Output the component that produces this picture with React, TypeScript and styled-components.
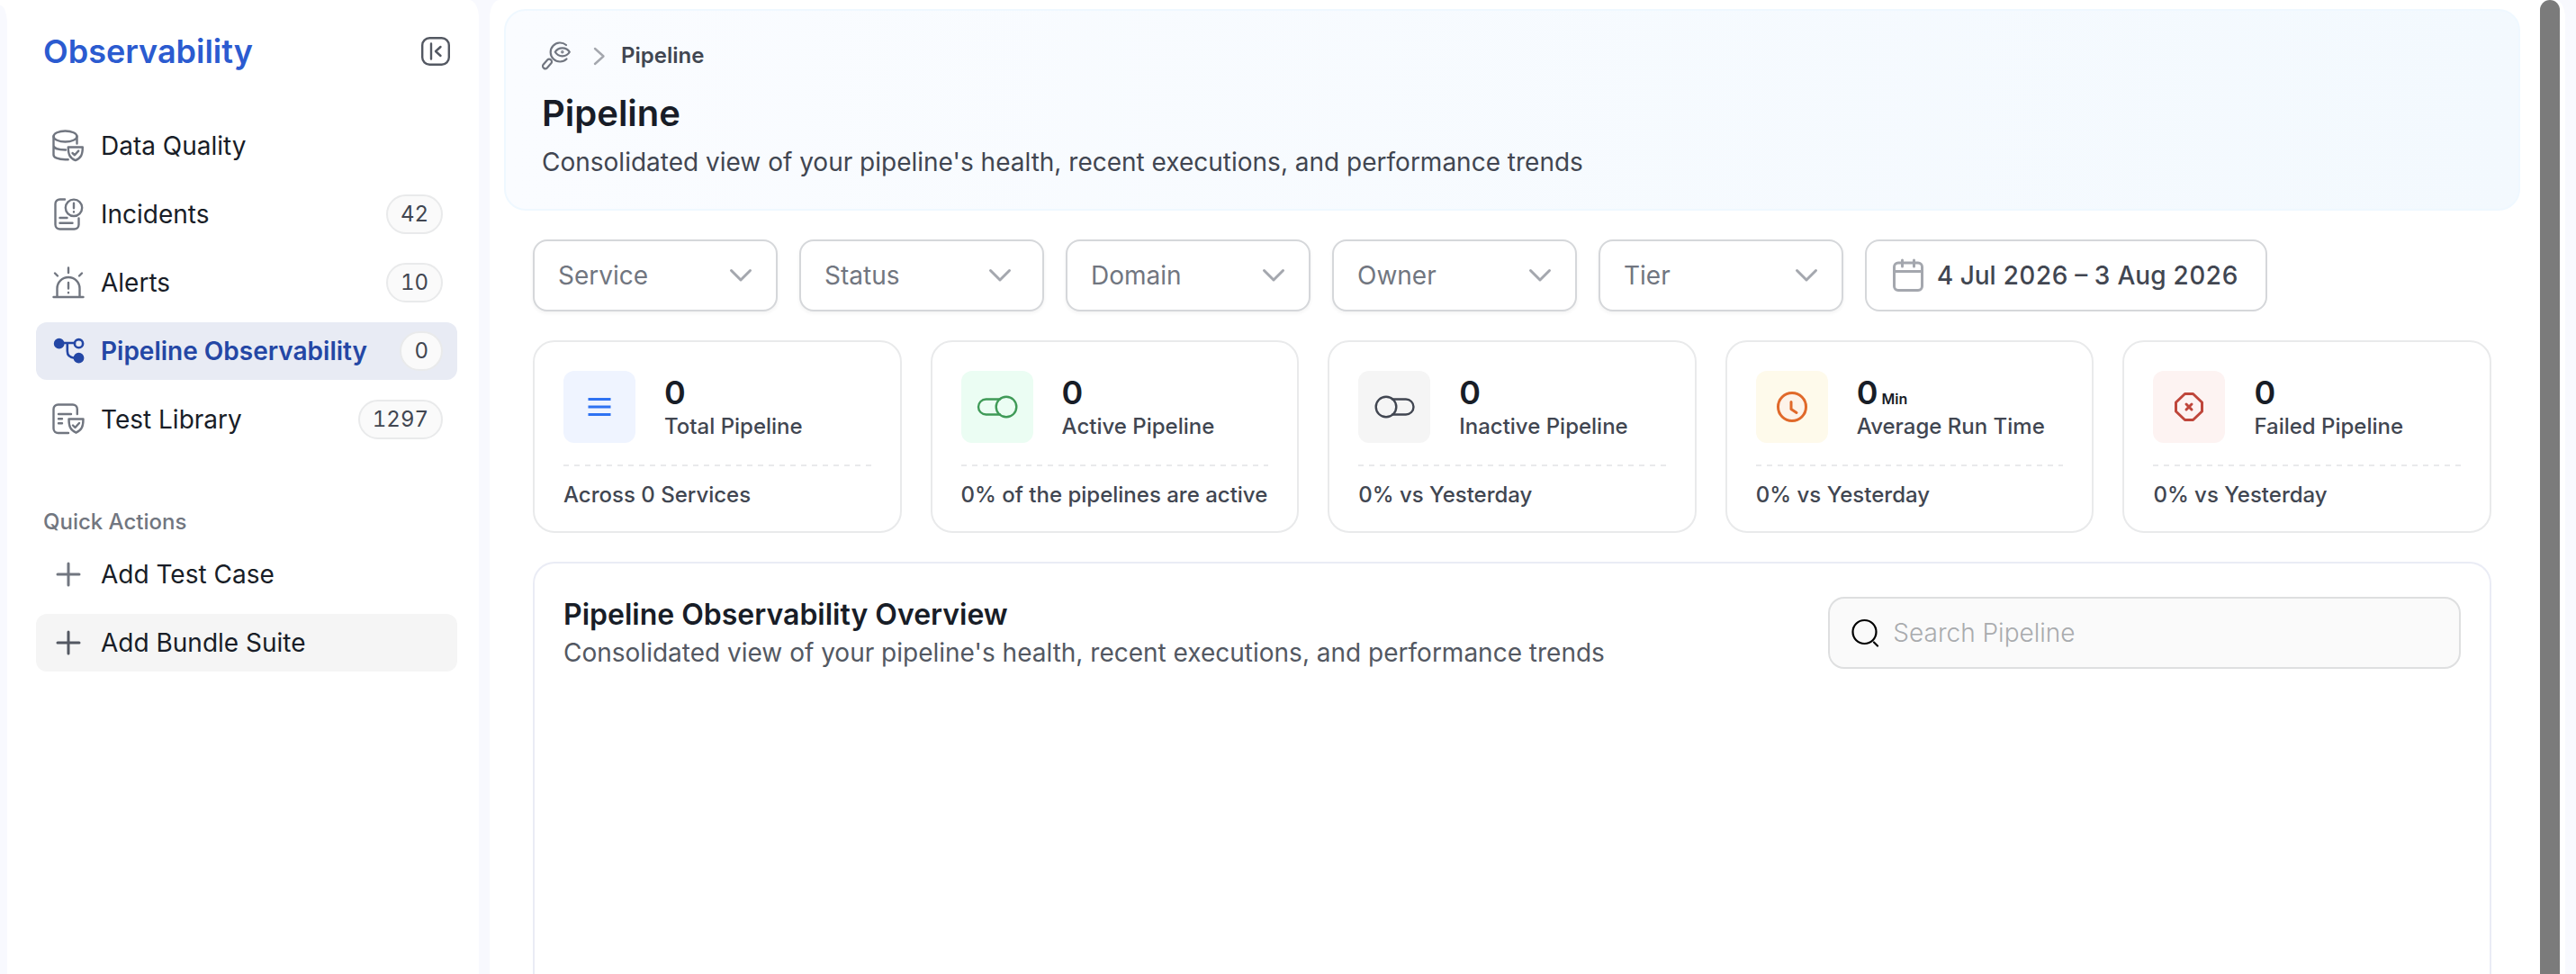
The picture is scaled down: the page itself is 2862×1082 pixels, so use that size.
import React from "react";
import styled, { createGlobalStyle } from "styled-components";

const GlobalStyle = createGlobalStyle`
  *, *::before, *::after { box-sizing: border-box; }
  body {
    margin: 0;
    background: #f8f9fe;
    color: #181d27;
    font-family: Inter, "Liberation Sans", sans-serif;
    font-size: 28px;
    line-height: 40px;
  }
  h1, h2, p { margin: 0; }
  button, input, select { font: inherit; color: inherit; }
`;

const Shell = styled.div`
  display: flex;
  height: 100vh;
  overflow: hidden;
`;

const RailEdge = styled.div`
  flex: none;
  width: 8px;
  background: linear-gradient(#ffffff, #ffffff) top / 100% 40px no-repeat;
  &::before {
    content: "";
    display: block;
    height: 100%;
    margin-top: 6px;
    border-top-right-radius: 8px 20px;
    background: #f8f9fe;
  }
`;

const Sidebar = styled.aside`
  flex: none;
  width: 524px;
  padding: 24px 24px 0 32px;
  background: #ffffff;
  border-radius: 0 11px 0 0 / 0 20px 0 0;
`;

const SidebarHeader = styled.div`
  display: flex;
  align-items: center;
  justify-content: space-between;
  height: 66px;
  margin-bottom: 40px;
  padding: 0 8px;
`;

const SidebarTitle = styled.h2`
  font-size: 36px;
  font-weight: 600;
  color: #2b5bd0;
`;

const IconButton = styled.button`
  display: flex;
  padding: 0;
  border: 0;
  background: none;
  color: #535862;
`;

const NavList = styled.nav`
  display: flex;
  flex-direction: column;
  gap: 12px;
`;

const NavLink = styled.a<{ $active?: boolean }>`
  display: flex;
  align-items: center;
  gap: 16px;
  height: 64px;
  padding: 0 16px;
  border-radius: 12px;
  text-decoration: none;
  white-space: nowrap;
  background: ${(p) => (p.$active ? "#e8ebf4" : "transparent")};
  color: ${(p) => (p.$active ? "#2447a5" : "#181d27")};
  font-weight: ${(p) => (p.$active ? 600 : 400)};
  svg { color: ${(p) => (p.$active ? "#2447a5" : "#717680")}; }
`;

const ActionButton = styled.button<{ $hovered?: boolean }>`
  display: flex;
  align-items: center;
  gap: 16px;
  height: 64px;
  padding: 0 16px;
  border: 0;
  border-radius: 12px;
  text-align: left;
  background: ${(p) => (p.$hovered ? "#f5f5f5" : "transparent")};
  svg { color: ${(p) => (p.$hovered ? "#535862" : "#717680")}; }
`;

const Badge = styled.span`
  margin-left: auto;
  padding: 0 14px;
  border: 2px solid #e9eaeb;
  border-radius: 22px;
  background: #fafafa;
  color: #414651;
  font-size: 24px;
  font-weight: 400;
  font-variant-numeric: tabular-nums;
`;

const GroupLabel = styled.p`
  margin: 64px 0 8px;
  padding: 0 8px;
  color: #717680;
  font-size: 24px;
  font-weight: 500;
  line-height: 36px;
`;

const Main = styled.main`
  display: flex;
  flex: 1;
  min-width: 0;
  margin: 0 12px;
  background: #ffffff;
  border-radius: 11px 11px 0 0 / 20px 20px 0 0;
`;

const Content = styled.div`
  display: flex;
  flex: 1;
  flex-direction: column;
  min-width: 0;
  padding: 10px 22px 0 16px;
`;

const ScrollThumb = styled.div`
  flex: none;
  width: 22px;
  margin-right: 6px;
  border-radius: 11px 11px 0 0;
  background: #7b7b7b;
`;

const PageHeader = styled.header`
  padding: 34px 40px 32px;
  border: 2px solid #eff8ff;
  border-radius: 24px;
  background: linear-gradient(90deg, #fafcff 0%, #f3f9fe 100%);
`;

const Breadcrumb = styled.nav`
  display: flex;
  align-items: center;
  height: 32px;
  gap: 16px;
  margin-bottom: 24px;
  color: #414651;
  font-size: 24px;
  font-weight: 600;
  a { display: flex; color: #717680; }
`;

const PageTitle = styled.h1`
  margin-bottom: 10px;
  font-size: 40px;
  font-weight: 600;
  line-height: 48px;
`;

const PageText = styled.p`
  color: #414651;
`;

const Body = styled.div`
  display: flex;
  flex: 1;
  flex-direction: column;
  gap: 32px;
  padding: 32px 32px 0;
`;

const Filters = styled.div`
  display: flex;
  gap: 24px;
`;

const FilterBox = styled.div<{ $inset: number }>`
  display: grid;
  flex: none;
  align-items: center;
  width: 272px;
  > * { grid-area: 1 / 1; }
  svg {
    justify-self: end;
    margin-right: ${(p) => p.$inset}px;
    color: #a4a7ae;
    pointer-events: none;
  }
`;

const FilterSelect = styled.select`
  appearance: none;
  width: 100%;
  height: 80px;
  padding: 0 26px;
  border: 2px solid #d5d7da;
  border-radius: 16px;
  background: #ffffff;
  box-shadow: 0 2px 4px rgba(10, 13, 18, 0.05);
  color: #717680;
`;

const DateButton = styled.button`
  display: flex;
  align-items: center;
  gap: 14px;
  height: 80px;
  padding: 0 30px 0 28px;
  border: 2px solid #d5d7da;
  border-radius: 16px;
  background: #ffffff;
  color: #414651;
  font-weight: 500;
  font-variant-numeric: tabular-nums;
  white-space: nowrap;
  svg { color: #a4a7ae; }
`;

const Cards = styled.section`
  display: grid;
  grid-template-columns: repeat(5, minmax(0, 1fr));
  gap: 32px;
`;

const Card = styled.article`
  padding: 32px 32px 24px;
  border: 2px solid #e9eaeb;
  border-radius: 24px;
  white-space: nowrap;
`;

const CardTop = styled.div`
  display: flex;
  align-items: center;
  gap: 32px;
`;

const CardIcon = styled.div<{ $bg: string; $fg: string }>`
  display: grid;
  place-items: center;
  width: 80px;
  height: 80px;
  border-radius: 12px;
  background: ${(p) => p.$bg};
  color: ${(p) => p.$fg};
`;

const CardValue = styled.p`
  font-size: 36px;
  font-weight: 600;
  line-height: 44px;
  small {
    margin-left: 4px;
    font-size: 16px;
    line-height: 16px;
  }
`;

const CardLabel = styled.p`
  color: #414651;
  font-size: 24px;
  font-weight: 500;
  line-height: 32px;
`;

const CardNote = styled(CardLabel)`
  padding-top: 16px;
`;

const Divider = styled.div`
  height: 2px;
  margin-top: 24px;
  background: repeating-linear-gradient(90deg, #e9eaeb 0 6px, transparent 6px 12px);
`;

const Overview = styled.section`
  display: flex;
  flex: 1;
  align-items: flex-start;
  justify-content: space-between;
  padding: 37px 32px 0;
  border: 2px solid #eaecf5;
  border-bottom: 0;
  border-radius: 24px 24px 0 0;
`;

const OverviewTitle = styled.h2`
  margin-bottom: 2px;
  font-size: 32px;
  font-weight: 600;
`;

const OverviewText = styled.p`
  color: #535862;
`;

const SearchBox = styled.label`
  display: flex;
  align-items: center;
  gap: 14px;
  width: calc(100% / 3);
  height: 80px;
  padding: 0 24px;
  border: 2px solid #dedfe0;
  border-radius: 18px;
  background: #fafafa;
  color: #000000;
  input {
    flex: 1;
    min-width: 0;
    padding: 0;
    border: 0;
    outline: 0;
    background: none;
    font-weight: 300;
  }
  input::placeholder { color: #a9abae; }
`;

type DrawingProps = {
  w: number;
  h: number;
  stroke?: number;
  children: React.ReactNode;
};

const Icon = styled.svg`
  flex: none;
`;

const Drawing = ({ w, h, stroke = 2.4, children }: DrawingProps) => (
  <Icon
    width={w}
    height={h}
    viewBox={`0 0 ${w} ${h}`}
    fill="none"
    stroke="currentColor"
    strokeWidth={stroke}
    strokeLinecap="round"
    strokeLinejoin="round"
    aria-hidden="true"
  >
    {children}
  </Icon>
);

const DataQualityIcon = () => (
  <Drawing w={40} h={40}>
    <ellipse cx="16.5" cy="9.5" rx="13" ry="6" />
    <path d="M3.500 9.500V30c0 3 5 5.200 13 5.200h3.200M29.500 9.500V17.500M3.500 19.500c0 2.800 5 5 13.500 5" />
    <path d="M19.800 21.500c5 0 11 0 16 0 0 8-1.600 12-8 14.600-6.400-2.600-8-6.600-8-14.600z" />
    <path d="M24.500 28l2.500 2.300 4.200-4.700" />
  </Drawing>
);

const IncidentsIcon = () => (
  <Drawing w={40} h={40}>
    <path d="M16 3.500h-5.500a5 5 0 0 0-5 5v23a5 5 0 0 0 5 5h16a5 5 0 0 0 5-5V24.500" />
    <path d="M10.500 24h8M10.500 29.700h14" />
    <circle cx="26" cy="12.800" r="9.200" />
    <path d="M26 7.800v5.500M26 17.300v.2" />
  </Drawing>
);

const AlertsIcon = () => (
  <Drawing w={40} h={40}>
    <path d="M3.500 36h33M7.500 36V26.500a12.500 12.500 0 0 1 25 0V36" />
    <path d="M20 3.500v5.500M5 9.500l3 3M35 9.500l-3 3M20 20v6.500M20 31v.2" />
  </Drawing>
);

const PipelineIcon = () => (
  <Drawing w={40} h={40} stroke={2.6}>
    <circle cx="9.700" cy="11.700" r="4.600" fill="currentColor" />
    <circle cx="31.500" cy="11.700" r="4.600" />
    <circle cx="31.500" cy="27.700" r="4.600" fill="currentColor" />
    <path d="M10 11h17M18.800 11v9c0 4.500 3 7.200 8 7.700" />
  </Drawing>
);

const TestLibraryIcon = () => (
  <Drawing w={40} h={40}>
    <path d="M29.800 14V8.500a5 5 0 0 0-5-5H8.500a5 5 0 0 0-5 5v21.500a5 5 0 0 0 5 5h11.500" />
    <path d="M9 14h14M9 19.300h4M9 24.300h4" />
    <path d="M20.500 19.500h16c0 8-1.600 12.500-8 15.200-6.400-2.700-8-7.200-8-15.200z" />
    <path d="M25 26.500l2.500 2.500 4.500-5" />
  </Drawing>
);

const PlusIcon = () => (
  <Drawing w={40} h={40} stroke={3}>
    <path d="M20 8v24M8 20h24" />
  </Drawing>
);

const CollapseIcon = () => (
  <Drawing w={32} h={32}>
    <rect x="1.200" y="1.200" width="29.600" height="29.600" rx="8" />
    <path d="M11 7.500v17M21.500 11l-5.500 5 5.500 5" />
  </Drawing>
);

const ObservabilityIcon = () => (
  <Drawing w={32} h={32} stroke={2.2}>
    <path d="M27 4a10.500 10.500 0 1 0 .5 15.500" />
    <path d="M14.800 11.800c3.500-6 12.500-6 16 0-3.500 6-12.500 6-16 0z" />
    <circle cx="22.800" cy="11.800" r=".6" />
    <rect x="-2.800" y="-6" width="5.600" height="12" rx="2.600" transform="translate(6 25) rotate(42)" />
  </Drawing>
);

const CrumbArrow = () => (
  <Drawing w={24} h={32}>
    <path d="M11 8l9.500 8.500L11 25" stroke="#a4a7ae" />
  </Drawing>
);

const ChevronIcon = () => (
  <Drawing w={26} h={16} stroke={3}>
    <path d="M2.500 2.500L13 13 23.500 2.500" />
  </Drawing>
);

const CalendarIcon = () => (
  <Drawing w={36} h={40} stroke={3}>
    <rect x="2.500" y="6" width="31" height="30.500" rx="4.500" />
    <path d="M2.500 15.500h31M11.500 3v7M24.500 3v7" />
  </Drawing>
);

const SearchIcon = () => (
  <Drawing w={32} h={32} stroke={2.2}>
    <circle cx="14.500" cy="15" r="13" />
    <path d="M25 26.500l4 4" />
  </Drawing>
);

const TotalIcon = () => (
  <Drawing w={44} h={44} stroke={3}>
    <path d="M9.500 13.500h25M9.500 22h25M9.500 30.500h25" strokeLinecap="butt" />
  </Drawing>
);

const ActiveIcon = () => (
  <Drawing w={46} h={32}>
    <path d="M26 7.500H10.500a8.500 8.500 0 0 0 0 17H26" />
    <circle cx="33" cy="16" r="11.300" />
  </Drawing>
);

const InactiveIcon = () => (
  <Drawing w={46} h={32}>
    <path d="M21 7.500h15a8.500 8.500 0 0 1 0 17H21" />
    <circle cx="14" cy="16" r="11.300" />
  </Drawing>
);

const ClockIcon = () => (
  <Drawing w={36} h={36} stroke={3}>
    <circle cx="18" cy="18" r="15.500" fill="#fdf3e9" />
    <path d="M17 12.500V20.500l6 4" />
  </Drawing>
);

const FailedIcon = () => (
  <Drawing w={36} h={36} stroke={3}>
    <path d="M13.500 3.500h9l10 9.500v10l-10 9.500h-9L3.500 23V13z" />
    <path d="M15 15l6 6M21 15l-6 6" />
  </Drawing>
);

const navItems = [
  { label: "Data Quality", icon: <DataQualityIcon /> },
  { label: "Incidents", icon: <IncidentsIcon />, count: 42 },
  { label: "Alerts", icon: <AlertsIcon />, count: 10 },
  { label: "Pipeline Observability", icon: <PipelineIcon />, count: 0, active: true },
  { label: "Test Library", icon: <TestLibraryIcon />, count: 1297 },
];

const filters = [
  { name: "Service", inset: 28 },
  { name: "Status", inset: 36 },
  { name: "Domain", inset: 28 },
  { name: "Owner", inset: 28 },
  { name: "Tier", inset: 28 },
];

const cards = [
  { label: "Total Pipeline", note: "Across 0 Services", icon: <TotalIcon />, bg: "#eff4ff", fg: "#2e72f2" },
  { label: "Active Pipeline", note: "0% of the pipelines are active", icon: <ActiveIcon />, bg: "#ebfdf3", fg: "#3f9a57" },
  { label: "Inactive Pipeline", note: "0% vs Yesterday", icon: <InactiveIcon />, bg: "#f5f5f5", fg: "#414651" },
  { label: "Average Run Time", note: "0% vs Yesterday", icon: <ClockIcon />, bg: "#fefaeb", fg: "#e0692a", unit: "Min" },
  { label: "Failed Pipeline", note: "0% vs Yesterday", icon: <FailedIcon />, bg: "#fdf3f2", fg: "#bf463b" },
];

const description =
  "Consolidated view of your pipeline's health, recent executions, and performance trends";

export default function App() {
  return (
    <>
      <GlobalStyle />
      <Shell>
        <RailEdge />
        <Sidebar>
          <SidebarHeader>
            <SidebarTitle>Observability</SidebarTitle>
            <IconButton type="button" aria-label="Collapse sidebar">
              <CollapseIcon />
            </IconButton>
          </SidebarHeader>
          <NavList>
            {navItems.map((item) => (
              <NavLink key={item.label} href="#" $active={item.active}>
                {item.icon}
                {item.label}
                {item.count !== undefined && <Badge>{item.count}</Badge>}
              </NavLink>
            ))}
          </NavList>
          <GroupLabel>Quick Actions</GroupLabel>
          <NavList>
            <ActionButton type="button">
              <PlusIcon />
              Add Test Case
            </ActionButton>
            <ActionButton type="button" $hovered>
              <PlusIcon />
              Add Bundle Suite
            </ActionButton>
          </NavList>
        </Sidebar>
        <Main>
          <Content>
            <PageHeader>
              <Breadcrumb>
                <a href="#" aria-label="Observability">
                  <ObservabilityIcon />
                </a>
                <CrumbArrow />
                <span>Pipeline</span>
              </Breadcrumb>
              <PageTitle>Pipeline</PageTitle>
              <PageText>{description}</PageText>
            </PageHeader>
            <Body>
              <Filters>
                {filters.map(({ name, inset }) => (
                  <FilterBox key={name} $inset={inset}>
                    <FilterSelect aria-label={name}>
                      <option>{name}</option>
                    </FilterSelect>
                    <ChevronIcon />
                  </FilterBox>
                ))}
                <DateButton type="button">
                  <CalendarIcon />4 Jul 2026 – 3 Aug 2026
                </DateButton>
              </Filters>
              <Cards>
                {cards.map((card) => (
                  <Card key={card.label}>
                    <CardTop>
                      <CardIcon $bg={card.bg} $fg={card.fg}>
                        {card.icon}
                      </CardIcon>
                      <div>
                        <CardValue>
                          0{card.unit && <small>{card.unit}</small>}
                        </CardValue>
                        <CardLabel>{card.label}</CardLabel>
                      </div>
                    </CardTop>
                    <Divider />
                    <CardNote>{card.note}</CardNote>
                  </Card>
                ))}
              </Cards>
              <Overview>
                <div>
                  <OverviewTitle>Pipeline Observability Overview</OverviewTitle>
                  <OverviewText>{description}</OverviewText>
                </div>
                <SearchBox>
                  <SearchIcon />
                  <input type="text" aria-label="Search Pipeline" placeholder="Search Pipeline" />
                </SearchBox>
              </Overview>
            </Body>
          </Content>
          <ScrollThumb />
        </Main>
      </Shell>
    </>
  );
}
